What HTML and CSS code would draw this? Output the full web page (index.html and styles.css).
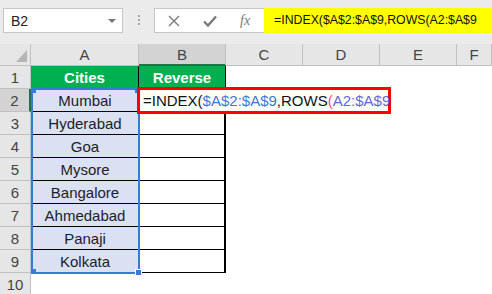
FILE: index.html
```html
<!DOCTYPE html>
<html lang="en">

<head>
    <meta charset="UTF-8">
    <title>Reverse Cities</title>
    <link rel="stylesheet" href="styles.css">
</head>

<body>

    <!-- Formula bar -->
    <div class="formula-bar">
        <div class="name-box">
            <span>B2</span>
            <span class="name-arrow"></span>
        </div>
        <div class="bar-sep">
            <span></span><span></span><span></span>
        </div>
        <div class="fx-box">
            <svg class="bar-icon cancel" width="14" height="14" viewBox="0 0 14 14">
                <path d="M2 2 L12 12 M12 2 L2 12" stroke="#7a7a7a" stroke-width="1.4" fill="none" />
            </svg>
            <svg class="bar-icon enter" width="16" height="14" viewBox="0 0 16 14">
                <path d="M2 7.5 L6 11.5 L14 2.5" stroke="#7a7a7a" stroke-width="2.4" fill="none" />
            </svg>
            <span class="fx">fx</span>
            <div class="formula-input">=INDEX($A$2:$A$9,ROWS(A2:$A$9</div>
        </div>
    </div>

    <!-- Sheet -->
    <div class="sheet">
        <div class="col-head corner"><span class="corner-tri"></span></div>
        <div class="col-head">A</div>
        <div class="col-head active">B</div>
        <div class="col-head">C</div>
        <div class="col-head">D</div>
        <div class="col-head">E</div>
        <div class="col-head">F</div>

        <div class="row-head">1</div>
        <div class="cell title">Cities</div>
        <div class="cell title">Reverse</div>
        <div class="cell empty"></div><div class="cell empty"></div><div class="cell empty"></div><div class="cell empty"></div>

        <div class="row-head active">2</div>
        <div class="cell city">Mumbai</div>
        <div class="cell result"></div>
        <div class="cell empty"></div><div class="cell empty"></div><div class="cell empty"></div><div class="cell empty"></div>

        <div class="row-head">3</div>
        <div class="cell city">Hyderabad</div>
        <div class="cell result"></div>
        <div class="cell empty"></div><div class="cell empty"></div><div class="cell empty"></div><div class="cell empty"></div>

        <div class="row-head">4</div>
        <div class="cell city">Goa</div>
        <div class="cell result"></div>
        <div class="cell empty"></div><div class="cell empty"></div><div class="cell empty"></div><div class="cell empty"></div>

        <div class="row-head">5</div>
        <div class="cell city">Mysore</div>
        <div class="cell result"></div>
        <div class="cell empty"></div><div class="cell empty"></div><div class="cell empty"></div><div class="cell empty"></div>

        <div class="row-head">6</div>
        <div class="cell city">Bangalore</div>
        <div class="cell result"></div>
        <div class="cell empty"></div><div class="cell empty"></div><div class="cell empty"></div><div class="cell empty"></div>

        <div class="row-head">7</div>
        <div class="cell city">Ahmedabad</div>
        <div class="cell result"></div>
        <div class="cell empty"></div><div class="cell empty"></div><div class="cell empty"></div><div class="cell empty"></div>

        <div class="row-head">8</div>
        <div class="cell city">Panaji</div>
        <div class="cell result"></div>
        <div class="cell empty"></div><div class="cell empty"></div><div class="cell empty"></div><div class="cell empty"></div>

        <div class="row-head">9</div>
        <div class="cell city">Kolkata</div>
        <div class="cell result"></div>
        <div class="cell empty"></div><div class="cell empty"></div><div class="cell empty"></div><div class="cell empty"></div>

        <div class="row-head">10</div>
        <div class="cell empty"></div><div class="cell empty"></div>
        <div class="cell empty"></div><div class="cell empty"></div><div class="cell empty"></div><div class="cell empty"></div>

        <!-- Range highlight for $A$2:$A$9 -->
        <div class="ref-range">
            <span class="ref-dot tl"></span>
            <span class="ref-dot tr"></span>
            <span class="ref-dot bl"></span>
            <span class="ref-dot br"></span>
        </div>

        <!-- Cell being edited -->
        <div class="edit-cell">=INDEX(<span class="ref1">$A$2:$A$9</span>,ROWS<span class="paren">(</span><span class="ref2">A2:$A$9</span></div>
    </div>

</body>

</html>
```

FILE: styles.css
```css
* {
    box-sizing: border-box;
    margin: 0;
    padding: 0;
}

body {
    width: 492px;
    height: 294px;
    overflow: hidden;
    background-color: #ffffff;
    font-family: "Liberation Sans", Arial, sans-serif;
    color: #1a1a1a;
}

/* Formula bar */
.formula-bar {
    display: flex;
    align-items: flex-start;
    height: 44px;
    padding-top: 8px;
    background-color: #ebebeb;
}

.name-box {
    display: flex;
    align-items: center;
    justify-content: space-between;
    width: 120px;
    height: 25px;
    margin-left: 3px;
    padding: 0 6px 0 7px;
    background-color: #fff;
    border: 1px solid #c6c6c6;
    font-size: 14px;
    color: #222;
}

.name-arrow {
    width: 0;
    height: 0;
    border-left: 4px solid transparent;
    border-right: 4px solid transparent;
    border-top: 4px solid #777;
}

.bar-sep {
    display: flex;
    flex-direction: column;
    align-items: center;
    gap: 2px;
    width: 31px;
    padding-top: 7px;
}

.bar-sep span {
    width: 2px;
    height: 2px;
    background-color: #a8a8a8;
}

.fx-box {
    display: flex;
    align-items: center;
    flex: 1;
    min-width: 0;
    height: 25px;
    background-color: #fff;
    border: 1px solid #c6c6c6;
    border-right: none;
}

.bar-icon {
    display: block;
    flex-shrink: 0;
}

.cancel {
    margin-left: 12px;
}

.enter {
    margin-left: 21px;
}

.fx {
    margin-left: 22px;
    font-family: "Liberation Serif", "Times New Roman", serif;
    font-style: italic;
    font-size: 14px;
    color: #777;
}

.formula-input {
    flex: 1;
    align-self: stretch;
    margin-left: 14px;
    margin-top: -1px;
    margin-bottom: -1px;
    padding-left: 10px;
    background-color: #ffff00;
    font-size: 12.3px;
    line-height: 25px;
    white-space: nowrap;
    color: #111;
}

/* Sheet grid */
.sheet {
    position: relative;
    display: grid;
    grid-template-columns: 31px 108px 87px 77px 77px 77px 1fr;
    grid-template-rows: 22px repeat(10, 23px);
    font-size: 15px;
}

.col-head,
.row-head {
    display: flex;
    align-items: center;
    justify-content: center;
    background-color: #e6e6e6;
    border-right: 1px solid #c0c0c0;
    border-bottom: 1px solid #c0c0c0;
    color: #444;
}

.col-head.active {
    background-color: #d3d3d3;
    border-bottom: 2px solid #217346;
}

.row-head.active {
    background-color: #d3d3d3;
    border-right: 2px solid #217346;
}

.corner {
    position: relative;
}

.corner-tri {
    position: absolute;
    right: 3px;
    bottom: 3px;
    width: 0;
    height: 0;
    border-left: 11px solid transparent;
    border-bottom: 12px solid #b5b5b5;
}

.cell {
    display: flex;
    align-items: center;
    justify-content: center;
    white-space: nowrap;
}

.title {
    background-color: #00b050;
    color: #fff;
    font-weight: bold;
    border-right: 1px solid #000;
}

.city {
    background-color: #d9e1f2;
    border-bottom: 1px solid #000;
    color: #1c1c2c;
}

.result {
    border-bottom: 1px solid #000;
    border-right: 2px solid #000;
}

/* Range reference highlight */
.ref-range {
    position: absolute;
    left: 31px;
    top: 44px;
    width: 109px;
    height: 186px;
    border: 2px solid #3c78d8;
}

.ref-dot {
    position: absolute;
    width: 5px;
    height: 5px;
    background-color: #3c78d8;
}

.ref-dot.tl {
    left: -2px;
    top: -2px;
}

.ref-dot.tr {
    right: -2px;
    top: -2px;
}

.ref-dot.bl {
    left: -2px;
    bottom: -2px;
}

.ref-dot.br {
    right: -4px;
    bottom: -4px;
    width: 7px;
    height: 7px;
    border: 1px solid #fff;
}

/* Cell in edit mode */
.edit-cell {
    position: absolute;
    left: 137px;
    top: 43px;
    width: 254px;
    height: 27px;
    padding-left: 3px;
    border: 3px solid #ff0000;
    background-color: #fff;
    font-size: 15px;
    line-height: 21px;
    white-space: nowrap;
    color: #111;
}

.ref1 {
    color: #3c78d8;
}

.paren {
    color: #e0559a;
}

.ref2 {
    color: #6b63d6;
}
```
